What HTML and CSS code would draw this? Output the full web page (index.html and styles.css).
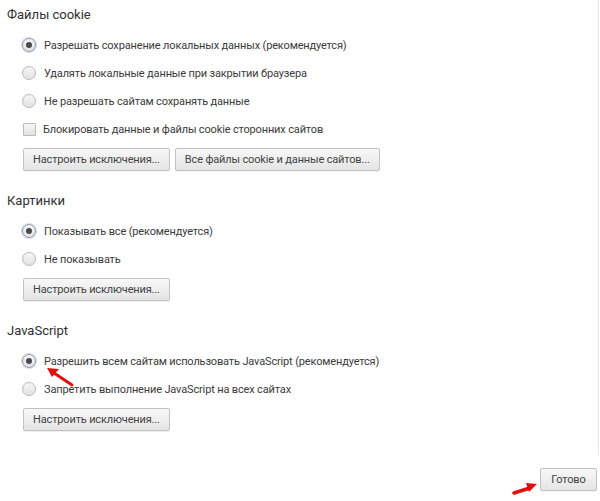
FILE: index.html
```html
<!DOCTYPE html>
<html lang="ru">
<head>
  <meta charset="UTF-8" />
  <title>Настройки контента</title>
  <link rel="stylesheet" href="styles.css">
</head>
<body>
  <div class="panel">
    <section class="group">
      <h3>Файлы cookie</h3>
      <div class="options">
        <label class="opt"><span class="radio checked"></span>Разрешать сохранение локальных данных (рекомендуется)</label>
        <label class="opt"><span class="radio"></span>Удалять локальные данные при закрытии браузера</label>
        <label class="opt"><span class="radio"></span>Не разрешать сайтам сохранять данные</label>
        <label class="opt"><span class="check"></span>Блокировать данные и файлы cookie сторонних сайтов</label>
      </div>
      <div class="buttons">
        <button class="btn">Настроить исключения...</button>
        <button class="btn">Все файлы cookie и данные сайтов...</button>
      </div>
    </section>

    <section class="group">
      <h3>Картинки</h3>
      <div class="options">
        <label class="opt"><span class="radio checked"></span>Показывать все (рекомендуется)</label>
        <label class="opt"><span class="radio"></span>Не показывать</label>
      </div>
      <div class="buttons">
        <button class="btn">Настроить исключения...</button>
      </div>
    </section>

    <section class="group">
      <h3>JavaScript</h3>
      <div class="options">
        <label class="opt"><span class="radio checked"></span>Разрешить всем сайтам использовать JavaScript (рекомендуется)</label>
        <label class="opt"><span class="radio"></span>Запретить выполнение JavaScript на всех сайтах</label>
      </div>
      <div class="buttons">
        <button class="btn">Настроить исключения...</button>
      </div>
    </section>
  </div>

  <div class="footer">
    <button class="btn done">Готово</button>
  </div>

  <!-- red annotation arrows -->
  <svg class="arrow arrow-js" width="40" height="30" viewBox="0 0 40 30">
    <path d="M30 22 L12 10" stroke="#e0100f" stroke-width="3" stroke-linecap="round" />
    <path d="M5 5 L17 6 L10 14 Z" fill="#e0100f" />
  </svg>
  <svg class="arrow arrow-done" width="36" height="20" viewBox="0 0 36 20">
    <path d="M4 16 L20 11" stroke="#e0100f" stroke-width="3.5" stroke-linecap="round" />
    <path d="M27 7 L16 6 L19 15 Z" fill="#e0100f" />
  </svg>
</body>
</html>
```

FILE: styles.css
```css
* {
  box-sizing: border-box;
}

body {
  margin: 0;
  width: 600px;
  height: 501px;
  background: #fff;
  color: #3a3a3a;
  font-family: Roboto, 'Open Sans', sans-serif;
  font-size: 11px;
  letter-spacing: -0.15px;
  position: relative;
  overflow: hidden;
}

.panel {
  width: 599px;
  height: 455px;
  padding: 5px 0 0 7px;
  border-right: 1px solid #e6e6e6;
}

.group h3 {
  margin: 0;
  font-size: 13px;
  font-weight: 400;
  line-height: 20px;
  letter-spacing: 0;
  color: #303030;
}

.group + .group {
  margin-top: 20px;
}

.options {
  margin-top: 6px;
  padding-left: 15px;
}

.opt {
  display: flex;
  align-items: center;
  height: 28px;
  white-space: nowrap;
}

.radio,
.check {
  width: 14px;
  height: 14px;
  margin-right: 8px;
  border: 1px solid #b9b9b9;
  background: linear-gradient(#f6f6f6, #e2e2e2);
  flex: none;
}

.radio {
  border-radius: 50%;
  position: relative;
}

.radio.checked {
  border-color: #8f9aae;
  box-shadow: 0 0 0 1px #d6dce8;
}

.radio.checked::after {
  content: "";
  position: absolute;
  left: 3px;
  top: 3px;
  width: 6px;
  height: 6px;
  border-radius: 50%;
  background: #4a4a4a;
}

.check {
  width: 13px;
  height: 13px;
  margin-left: 1px;
  margin-right: 7px;
  border-radius: 1px;
}

.buttons {
  display: flex;
  gap: 5px;
  margin-top: 5px;
  padding-left: 16px;
}

.btn {
  height: 23px;
  padding: 0 9px;
  font-family: inherit;
  font-size: 11px;
  letter-spacing: -0.15px;
  color: #444;
  border: 1px solid #c2c2c2;
  border-radius: 2px;
  background: linear-gradient(#f8f8f8, #e4e4e4);
  box-shadow: 0 1px 0 rgba(0, 0, 0, 0.06);
}

.footer {
  display: flex;
  justify-content: flex-end;
  padding: 13px 3px 0 0;
}

.done {
  width: 57px;
  padding: 0;
}

.arrow {
  position: absolute;
}

.arrow-js {
  left: 42px;
  top: 363px;
}

.arrow-done {
  left: 510px;
  top: 477px;
}
```
